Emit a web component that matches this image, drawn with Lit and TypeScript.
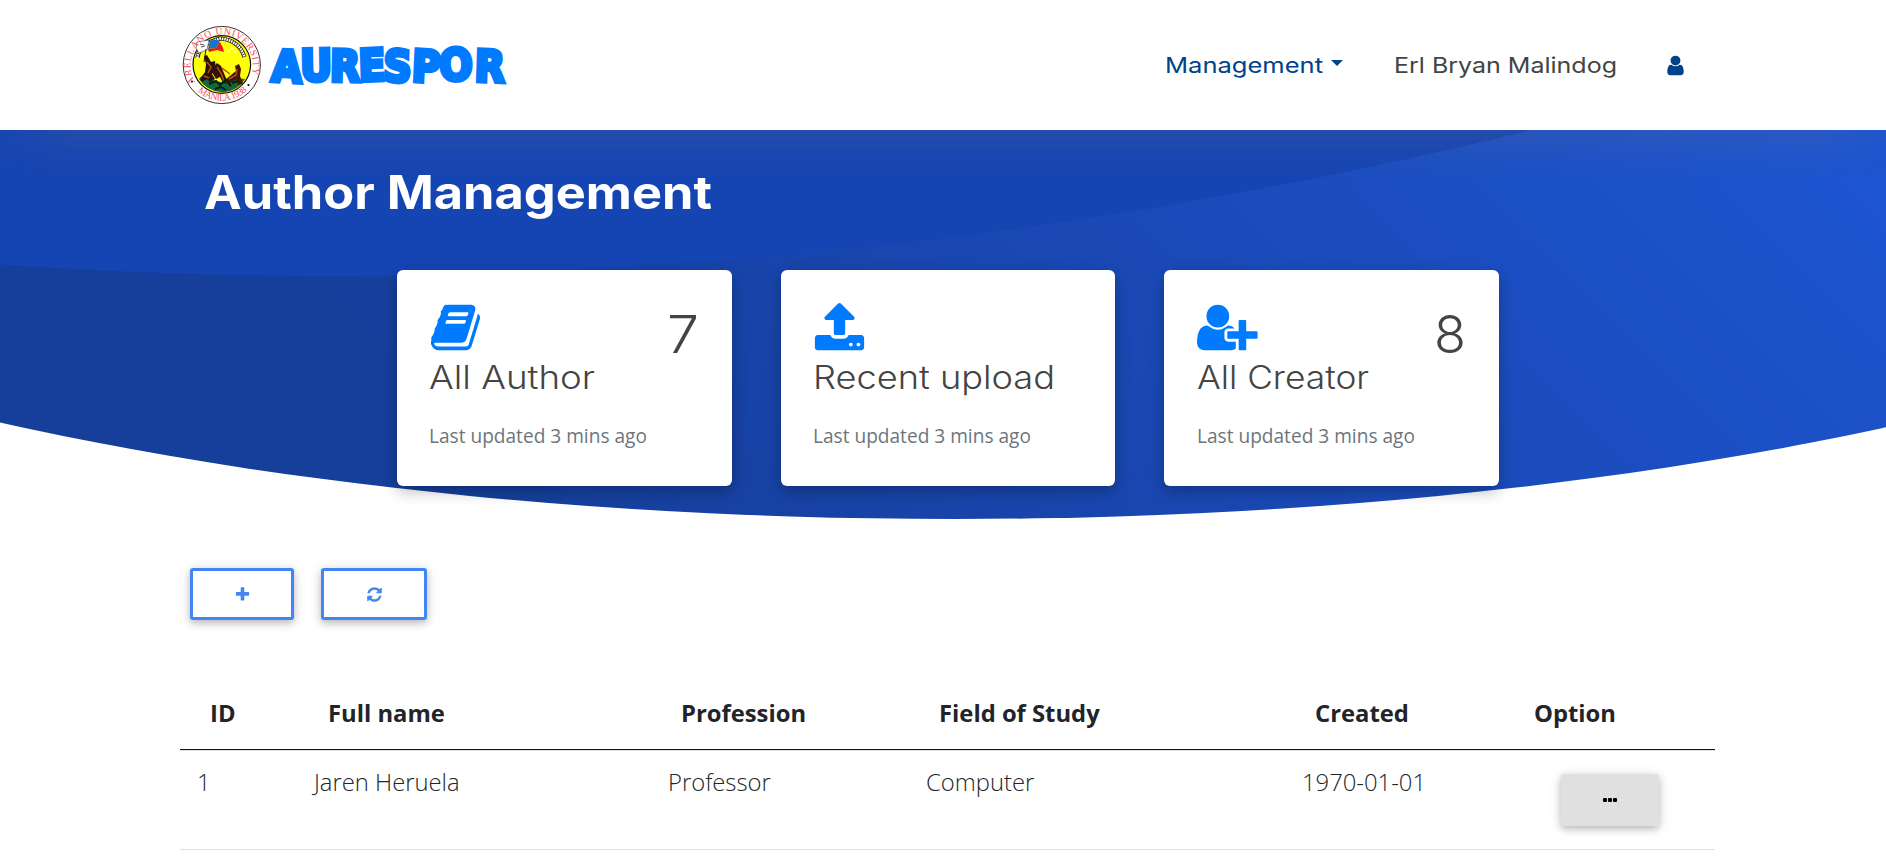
import { LitElement, html, svg, css } from "lit";
import { customElement } from "lit/decorators.js";

const ICONS: Record<string, { w: number; d: string }> = {
  user: { w: 1792, d: "M1536 1399q0 109-62.5 187t-150.5 78h-854q-88 0-150.5-78t-62.5-187q0-85 8.5-160.5t31.5-152 58.5-131 94-89 134.5-34.5q131 128 313 128t313-128q76 0 134.5 34.5t94 89 58.5 131 31.5 152 8.5 160.5zm-256-887q0 159-112.5 271.5t-271.5 112.5-271.5-112.5-112.5-271.5 112.5-271.5 271.5-112.5 271.5 112.5 112.5 271.5z" },
  plus: { w: 1792, d: "M1600 736v192q0 40-28 68t-68 28h-416v416q0 40-28 68t-68 28h-192q-40 0-68-28t-28-68v-416h-416q-40 0-68-28t-28-68v-192q0-40 28-68t68-28h416v-416q0-40 28-68t68-28h192q40 0 68 28t28 68v416h416q40 0 68 28t28 68z" },
  refresh: { w: 1792, d: "M1639 1056q0 5-1 7-64 268-268 434.5t-478 166.5q-146 0-282.5-55t-243.5-157l-129 129q-19 19-45 19t-45-19-19-45v-448q0-26 19-45t45-19h448q26 0 45 19t19 45-19 45l-137 137q71 66 161 102t187 36q134 0 250-65t186-179q11-17 53-117 8-23 30-23h192q13 0 22.5 9.5t9.5 22.5zm25-800v448q0 26-19 45t-45 19h-448q-26 0-45-19t-19-45 19-45l138-138q-148-137-349-137-134 0-250 65t-186 179q-11 17-53 117-8 23-30 23h-199q-13 0-22.5-9.5t-9.5-22.5v-7q65-268 270-434.5t480-166.5q146 0 284 55.5t245 156.5l130-129q19-19 45-19t45 19 19 45z" },
  book: { w: 1792, d: "M1703 478q40 57 18 129l-275 906q-19 64-76.5 107.5t-122.5 43.5h-923q-77 0-148.5-53.5t-99.5-131.5q-24-67-2-127 0-4 3-27t4-37q1-8-3-21.5t-3-19.5q2-11 8-21t16.5-23.5 16.5-23.5q23-38 45-91.5t30-91.5q3-10 .5-30t-.5-28q3-11 17-28t17-23q21-36 42-92t25-90q1-9-2.5-32t.5-28q4-13 22-30.5t22-22.5q19-26 42.5-84.5t27.5-96.5q1-8-3-25.5t-2-26.5q2-8 9-18t18-23 17-21q8-12 16.5-30.5t15-35 16-36 19.5-32 26.5-23.5 36-11.5 47.5 5.5l-1 3q38-9 51-9h761q74 0 114 56t18 130l-274 906q-36 119-71.5 153.5t-128.5 34.5h-869q-27 0-38 15-11 16-1 43 24 70 144 70h923q29 0 56-15.5t35-41.5l300-987q7-22 5-57 38 15 59 43zm-1064 2q-4 13 2 22.5t20 9.5h608q13 0 25.5-9.5t16.5-22.5l21-64q4-13-2-22.5t-20-9.5h-608q-13 0-25.5 9.5t-16.5 22.5zm-83 256q-4 13 2 22.5t20 9.5h608q13 0 25.5-9.5t16.5-22.5l21-64q4-13-2-22.5t-20-9.5h-608q-13 0-25.5 9.5t-16.5 22.5z" },
  upload: { w: 1792, d: "M1344 1472q0-26-19-45t-45-19-45 19-19 45 19 45 45 19 45-19 19-45zm256 0q0-26-19-45t-45-19-45 19-19 45 19 45 45 19 45-19 19-45zm128-224v320q0 40-28 68t-68 28h-1472q-40 0-68-28t-28-68v-320q0-40 28-68t68-28h427q21 56 70.5 92t110.5 36h256q61 0 110.5-36t70.5-92h427q40 0 68 28t28 68zm-325-648q-17 40-59 40h-256v448q0 26-19 45t-45 19h-256q-26 0-45-19t-19-45v-448h-256q-42 0-59-40-17-39 14-69l448-448q18-19 45-19t45 19l448 448q31 30 14 69z" },
  userPlus: { w: 2048, d: "M704 896q-159 0-271.5-112.5T320 512t112.5-271.5T704 128t271.5 112.5T1088 512 975.5 783.5 704 896zm960 128h352q13 0 22.5 9.5t9.5 22.5v192q0 13-9.5 22.5t-22.5 9.5h-352v352q0 13-9.5 22.5t-22.5 9.5h-192q-13 0-22.5-9.5t-9.5-22.5v-352h-352q-13 0-22.5-9.5t-9.5-22.5v-192q0-13 9.5-22.5t22.5-9.5h352V672q0-13 9.5-22.5t22.5-9.5h192q13 0 22.5 9.5t9.5 22.5zm-736 224q0 52 38 90t90 38h256v238q-68 50-171 50H267q-121 0-194-69T0 1405q0-53 3.5-103.5t14-109T44 1084t43-97.5 62-81 85.5-53.5T346 832q19 0 39 17 79 61 154.5 91.5T704 971t164.5-30.5T1023 849q20-17 39-17 132 0 217 96h-223q-52 0-90 38t-38 90z" },
};

const icon = (name: string, size: number) => {
  const i = ICONS[name];
  return html`<svg class="icon" width=${(size * i.w) / 1792} height=${size} viewBox="0 0 ${i.w} 1792"><path d=${i.d} /></svg>`;
};

/* One line of display text stretched to a set width; the baseline sits at `base`. */
const line = (text: string, width: number, height: number, base: number, cls: string) => html`
  <svg class="line ${cls}" width=${width} height=${height}>
    ${svg`<text x="0" y=${base} textLength=${width} lengthAdjust="spacingAndGlyphs">${text}</text>`}
  </svg>`;

const CARDS = [
  { icon: "book", title: "All Author", width: 166, count: "7", pad: 32 },
  { icon: "upload", title: "Recent upload", width: 242, count: "", pad: 32.5 },
  { icon: "userPlus", title: "All Creator", width: 172, count: "8", pad: 33 },
];

const HEAD = ["ID", "Full name", "Profession", "Field of Study", "Created", "Option"];
const ROWS = [["1", "Jaren Heruela", "Professor", "Computer", "1970-01-01"]];

@customElement("app-root")
export class AppRoot extends LitElement {
  static styles = css`
    :host { display: block; height: 859px; overflow: hidden; background: #fff; font-family: "Open Sans", sans-serif; color: #212529; }
    * { box-sizing: border-box; }
    svg { display: block; overflow: visible; flex: none; }
    .icon { fill: currentColor; }
    .line { font-family: Inter, sans-serif; fill: currentColor; }
    header { height: 130px; display: flex; align-items: center; padding: 0 199px 0 182px; background: #fff; }
    .brand { display: flex; align-items: center; gap: 8px; }
    .word { font-family: "DejaVu Sans", sans-serif; font-weight: 700; fill: #007bff; stroke: #007bff; stroke-width: 4.4; stroke-linejoin: miter; stroke-miterlimit: 2; font-size: 43.5px; }
    nav { margin-left: auto; display: flex; align-items: center; height: 30px; }
    .nav { font-size: 21.4px; font-weight: 400; }
    .blue2 { color: #00438a; }
    .dark { color: #444; }
    .caret { border: 6px solid transparent; border-top-color: #00438a; border-bottom: 0; margin: 0 51px 5px 8px; }
    .me { margin-left: 47.5px; }
    .hero { position: relative; height: 390px; }
    .bg { position: absolute; left: 0; top: 0; }
    .inner { position: relative; padding: 35px 0 0 204px; }
    .h1 { font-size: 46px; font-weight: 700; color: #fff; }
    .cards { display: flex; gap: 49px; margin: 45px 0 0 193px; }
    .card { width: 334.5px; height: 216px; background: #fff; border-radius: 6px; box-shadow: 0 5px 15px rgba(0,0,0,.28); padding-top: 31px; }
    .top { display: flex; justify-content: space-between; color: #007bff; height: 62px; padding-right: 33px; }
    .count { font-size: 51.5px; font-weight: 300; color: #444; }
    .title { font-size: 32px; font-weight: 300; color: #444; }
    .small { margin: 24px 0 0 0; font-size: 19.1px; line-height: 26px; color: #6c757d; }
    .tools { display: flex; gap: 27px; padding: 48px 0 0 190px; }
    .btn { display: flex; align-items: center; justify-content: center; height: 52px; border: 3px solid #4285f4; border-radius: 3px; background: #fff; color: #4285f4; box-shadow: 0 3px 7px rgba(0,0,0,.2), 0 2px 14px rgba(0,0,0,.12); }
    .add { width: 104px; }
    .sync { width: 106px; }
    .table { margin: 62px 171px 0 180px; }
    .row { display: grid; grid-template-columns: 117px 354px 258px 376px 213px 1fr; }
    .head { font-weight: 700; font-size: 23.8px; line-height: 32px; height: 68px; padding-top: 15px; border-bottom: 1px solid #111; }
    .head span { padding-left: 30px; }
    .head span:nth-child(2) { padding-left: 31px; }
    .head span:last-child { padding-left: 36px; }
    .body { font-weight: 300; font-size: 23.8px; line-height: 32px; height: 100px; padding-top: 15px; border-top: 1px solid #dee2e6; border-bottom: 1px solid #dee2e6; }
    .body span { padding-left: 17px; }
    .more { width: 98px; height: 52px; margin: 8px 0 0 62.5px; border-radius: 3px; background: #e0e0e0; display: flex; align-items: center; justify-content: center; gap: 1px; box-shadow: 0 3px 7px rgba(0,0,0,.2), 0 2px 14px rgba(0,0,0,.12); }
    .dot { width: 4px; height: 4px; border-radius: 1px; background: #000; }
    .ring { font-family: "Liberation Serif", serif; font-size: 9.6px; fill: #ff4a4a; }
  `;

  private seal() {
    return html`<svg width="80" height="80" viewBox="0 0 80 80">
      <defs>
        <path id="up" d="M13.4 57.2A31.2 31.2 0 1 1 66.2 57.2" />
        <path id="low" d="M11.5 62.3A36.8 36.8 0 0 0 68.1 62.3" />
      </defs>
      <circle cx="39.8" cy="40" r="38.6" fill="#fff" stroke="#333" stroke-width="1" />
      <circle cx="39.8" cy="39.5" r="28.8" fill="#ffff05" stroke="#111" stroke-width="1.2" />
      <path d="M17 54Q20 49 25 51L33 56 45 58 53 53 63 54Q56 66 41 67.5 24 66 17 54Z" fill="#12683c" />
      <path d="M18 54l5-7 1-8-2-8 3-1 4 7 4-1 1 8-4 5 3 5-5 3-3-3-5 3z" fill="#2a1205" />
      <path d="M31 43l4-5 4 3 2 5 3 7 1 6-4-1-3-6-4 2-3-5z" fill="#301407" />
      <path d="M43 55l6-5 5-4-1-5 4-2 2 5-1 7 3 8-5 1-1-6-7 4z" fill="#401705" />
      <path d="M25 37l4 5-3 6M35 42l4 6 3 8M55 44l-1 6-7 4M22 51l5 2M40 43l8 6" stroke="#b94b18" stroke-width="1.5" fill="none" />
      <path d="M27 59l7-3 4 4 6-5 5 6M33 64l6-2 5 3M50 58l6-2" stroke="#061d10" stroke-width="2" fill="none" />
      <path d="M15.5 33Q16 23 28 17L38 13.5Q57 15 62.5 32" fill="none" stroke="#222" stroke-width="4.2" />
      <path d="M15.5 33Q16 23 28 17L38 13.5Q57 15 62.5 32" fill="none" stroke="#fff" stroke-width="2.6" stroke-dasharray="1.6 .8" />
      <path d="M15 17l12-2-2 10-8 3-3-5z" fill="#fff" stroke="#555" stroke-width=".7" />
      <path d="M18 19l4 1M19 22l4-1" stroke="#555" stroke-width="1" />
      <path d="M28 16q6-3 10 1l-4 6-8 1z" fill="#1873c9" />
      <path d="M26 24l8-1 4-6 3 6 1 4-7-2-8 2z" fill="#e51b22" />
      <path d="M24 24l-2 13" stroke="#222" stroke-width="1" />
      <circle cx="50" cy="23" r="1" fill="#fff" /><circle cx="47" cy="26" r="1" fill="#fff" /><circle cx="53" cy="27" r="1" fill="#fff" />
      <circle cx="10" cy="56.5" r="1.1" /><circle cx="66.5" cy="60" r="1.1" />
      <text class="ring"><textPath href="#up" textLength="124">ARELLANO UNIVERSITY</textPath></text>
      <text class="ring"><textPath href="#low" startOffset="6" textLength="54">MANILA 1938</textPath></text>
    </svg>`;
  }

  render() {
    return html`
      <header>
        <div class="brand">
          ${this.seal()}
          <svg width="240" height="80">
            <text class="word" transform="scale(.9 1)" x="1 34 66.5 99 125.5 157 189 227" y="56" rotate="3 -1 1 -2 2 3 -3 2">AURESPOR</text>
          </svg>
        </div>
        <nav>
          <span class="blue2">${line("Management", 158, 30, 23, "nav")}</span>
          <i class="caret"></i>
          <span class="dark">${line("Erl Bryan Malindog", 223, 30, 23, "nav")}</span>
          <span class="me blue2">${icon("user", 23)}</span>
        </nav>
      </header>
      <section class="hero">
        <svg class="bg" width="1886" height="390" viewBox="0 0 1886 390">
          <defs>
            <linearGradient id="g" gradientUnits="userSpaceOnUse" x1="150" y1="0" x2="980" y2="-830">
              <stop offset="0" stop-color="#163f9c" /><stop offset=".5" stop-color="#1a49b6" /><stop offset="1" stop-color="#1d54d0" />
            </linearGradient>
            <linearGradient id="t" x1="0" y1="0" x2="0" y2="1">
              <stop offset="0" stop-color="#777" stop-opacity=".16" /><stop offset=".4" stop-color="#777" stop-opacity=".07" /><stop offset="1" stop-color="#777" stop-opacity="0" />
            </linearGradient>
            <linearGradient id="f"><stop offset="0" stop-color="#444" /><stop offset=".04" stop-color="#fff" /><stop offset=".96" stop-color="#fff" /><stop offset="1" stop-color="#444" /></linearGradient>
            <mask id="m"><rect width="1886" height="50" fill="url(#f)" /></mask>
            <clipPath id="c"><rect width="1886" height="390" /></clipPath>
          </defs>
          <g clip-path="url(#c)">
            <ellipse cx="954" cy="-148" rx="1668" ry="537" fill="url(#g)" />
            <path d="M0 0V134.4Q766 187 1532 0Z" fill="#1545b3" />
            <rect width="1886" height="50" fill="url(#t)" mask="url(#m)" />
          </g>
        </svg>
        <div class="inner">
          ${line("Author Management", 508, 60, 43.5, "h1")}
          <div class="cards">
            ${CARDS.map((c) => html`
              <div class="card" style="padding-left:${c.pad}px">
                <div class="top">${icon(c.icon, 53)}${c.count ? line(c.count, 32, 60, 52, "count") : ""}</div>
                ${line(c.title, c.width, 36, 26, "title")}
                <div class="small">Last updated 3 mins ago</div>
              </div>`)}
          </div>
        </div>
      </section>
      <div class="tools">
        <div class="btn add">${icon("plus", 17)}</div>
        <div class="btn sync">${icon("refresh", 17)}</div>
      </div>
      <div class="table">
        <div class="row head">${HEAD.map((h) => html`<span>${h}</span>`)}</div>
        ${ROWS.map((r) => html`<div class="row body">${r.map((v) => html`<span>${v}</span>`)}
          <div class="more"><i class="dot"></i><i class="dot"></i><i class="dot"></i></div></div>`)}
      </div>`;
  }
}
